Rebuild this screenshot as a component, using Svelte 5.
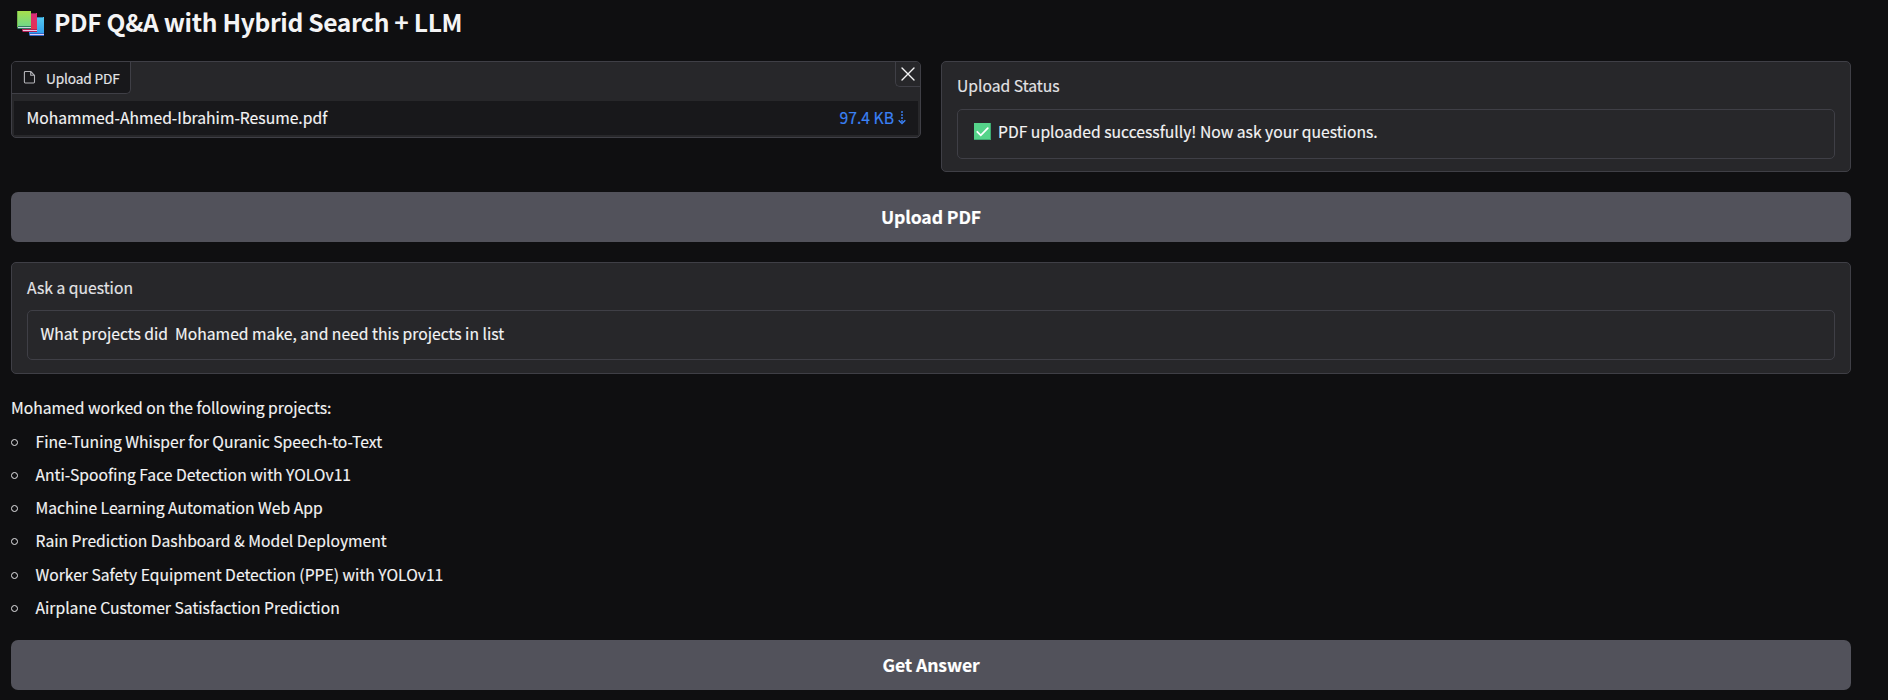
<script>
  const projects = [
    'Fine-Tuning Whisper for Quranic Speech-to-Text',
    'Anti-Spoofing Face Detection with YOLOv11',
    'Machine Learning Automation Web App',
    'Rain Prediction Dashboard & Model Deployment',
    'Worker Safety Equipment Detection (PPE) with YOLOv11',
    'Airplane Customer Satisfaction Prediction'
  ];
  const question = 'What projects did  Mohamed make, and need this projects in list';
</script>

<main>
  <h1>
    <svg class="books" width="28" height="26" viewBox="0 0 28 26">
      <defs>
        <linearGradient id="green" x1="0" y1="0" x2="0" y2="1"><stop offset="0" stop-color="#a7df4c" /><stop offset="1" stop-color="#6fd78b" /></linearGradient>
        <linearGradient id="red" x1="0" y1="0" x2="0" y2="1"><stop offset="0" stop-color="#d92b7c" /><stop offset="1" stop-color="#e5334b" /></linearGradient>
        <linearGradient id="blue" x1="0" y1="0" x2="0" y2="1"><stop offset="0" stop-color="#55c9f0" /><stop offset="1" stop-color="#319fed" /></linearGradient>
      </defs>
      <path d="M14 6h13v17H12V9z" fill="url(#blue)" />
      <path d="M20 6h6v1h-6z" fill="#2b86b8" />
      <path d="M12 22h15v3H13l-1-1z" fill="#2f68c8" /><path d="M13 23h14v1H13z" fill="#e2cdf5" />
      <path d="M7 3l1-1h12v18H5V5z" fill="url(#red)" />
      <path d="M14 2h5v1h-5z" fill="#8f1f55" />
      <path d="M5 18h15v3H6l-1-1z" fill="#b51e55" /><path d="M6 19h14v1H6z" fill="#edc9e7" />
      <path d="M0 0h14v16H0z" fill="url(#green)" />
      <path d="M0 15h14v3H1l-1-1z" fill="#34795f" /><path d="M1 16h13v1H1z" fill="#c9d9dc" />
      <path d="M0 0h1v16H0z" fill="#73b84b" />
    </svg>
    <span>PDF Q&amp;A with Hybrid Search + LLM</span>
  </h1>

  <div class="row">
    <section class="file">
      <div class="bar">
        <div class="tab">
          <svg width="13" height="15" viewBox="0 0 13 15" fill="none" stroke="#b4b4b9" stroke-width="1.1" stroke-linejoin="round"><path d="M7.7 1.5H2.3a.9.9 0 0 0-.9.9v9.7c0 .5.4.9.9.9h8.3c.5 0 .9-.4.9-.9V5.3zM7.7 1.5v3.8h3.8" /></svg>
          <span>Upload PDF</span>
        </div>
        <button class="close" aria-label="Clear">
          <svg width="14" height="14" viewBox="0 0 14 14" stroke="#f4f4f5" stroke-width="1.4" stroke-linecap="round"><path d="M1 1l12 12M13 1L1 13" /></svg>
        </button>
      </div>
      <div class="entry">
        <span class="name">Mohammed-Ahmed-Ibrahim-Resume.pdf</span>
        <span class="size"><span>97.4 KB</span>
          <svg width="8" height="14" viewBox="0 0 8 14" fill="none" stroke="#3b82f6"><path d="M4 0v12" stroke-width="1.4" stroke-dasharray="2 1" /><path d="M.7 9.3L4 12.6l3.3-3.3" stroke-width="1.4" /></svg>
        </span>
      </div>
    </section>

    <section class="card">
      <div class="label">Upload Status</div>
      <div class="field status">
        <svg class="check" width="17" height="17" viewBox="0 0 17 17"><path d="M0 0h17v17H0z" fill="#55d48a" /><path d="M0 16h17v1H0zM16 0h1v17h-1z" fill="#3eaa70" /><path d="M3.3 8.8l3.5 3.5 7-7.2" fill="none" stroke="#fff" stroke-width="1.8" stroke-linecap="round" /></svg>
        <span>PDF uploaded successfully! Now ask your questions.</span>
      </div>
    </section>
  </div>

  <button class="action"><span>Upload PDF</span></button>

  <section class="card ask">
    <div class="label">Ask a question</div>
    <div class="field"><span>{question}</span></div>
  </section>

  <div class="answer">
    <p><span>Mohamed worked on the following projects:</span></p>
    <ul>
      {#each projects as project}
        <li><i></i><span>{project}</span></li>
      {/each}
    </ul>
  </div>

  <button class="action"><span>Get Answer</span></button>
</main>

<style>
  :global(body) { background: #0f0f11; }
  main {
    box-sizing: border-box;
    width: 1888px;
    height: 700px;
    padding: 0 37px 0 11px;
    overflow: hidden;
    background: #0f0f11;
    color: #f4f4f5;
    font: 400 15.68px/26px "Noto Sans CJK SC", "Noto Sans", sans-serif;
    -webkit-text-stroke: 0.15px currentColor;
  }
  span { white-space: pre; }
  h1 {
    display: flex;
    align-items: center;
    gap: 9px;
    height: 46px;
    margin: 0 0 15px;
    padding-left: 6px;
    font-size: 24.6px;
    font-weight: 600;
    letter-spacing: -0.34px;
    -webkit-text-stroke: 0;
  }
  h1 span { padding-bottom: 5px; }
  .books { flex: none; margin-top: 2px; }
  .row { display: grid; grid-template-columns: 1fr 1fr; gap: 20px; height: 111px; margin-bottom: 20px; align-items: start; }
  section { box-sizing: border-box; border: 1px solid #3f3f46; border-radius: 5px; background: #27272a; }
  .file { height: 77px; padding: 0 2px; overflow: hidden; }
  .bar { display: flex; justify-content: space-between; align-items: flex-start; height: 39px; margin: 0 -2px; }
  .tab {
    box-sizing: border-box;
    display: flex;
    align-items: center;
    gap: 10px;
    width: 119px;
    height: 32px;
    padding: 0 0 1px 11px;
    border: solid #3f3f46;
    border-width: 0 1px 1px 0;
    border-radius: 0 0 5px 0;
    background: #18181b;
    color: #e4e4e7;
    font-size: 13.7px;
    letter-spacing: -0.15px;
  }
  .tab span { padding-top: 1px; }
  .close {
    box-sizing: border-box;
    display: grid;
    place-items: center;
    width: 25px;
    height: 25px;
    padding: 0 1px 0 0;
    border: solid #3f3f46;
    border-width: 0 0 1px 1px;
    border-radius: 0 0 0 5px;
    background: #27272a;
  }
  .entry { display: flex; justify-content: space-between; align-items: center; height: 34px; padding: 0 12px 0 12.5px; background: #18181b; }
  .size { display: flex; align-items: center; gap: 4px; color: #3b82f6; }
  .card { height: 111px; padding: 11px 15px 0; }
  .label { height: 26px; margin-bottom: 10px; color: #e4e4e7; }
  .field { box-sizing: border-box; display: flex; align-items: center; height: 50px; padding: 0 12.5px 3px; border: 1px solid #3f3f46; border-radius: 5px; }
  .status { padding: 0 12px 5px; }
  .check { flex: none; margin: 0 7px 0 4px; }
  .action {
    display: flex;
    align-items: center;
    justify-content: center;
    width: 100%;
    height: 50px;
    padding: 0 0 1px;
    border: 0;
    border-radius: 7px;
    background: #52525b;
    color: #fff;
    font: 600 17.6px/26px "Noto Sans CJK SC", "Noto Sans", sans-serif;
    letter-spacing: -0.1px;
  }
  .ask { height: 112px; margin: 20px 0; padding-top: 12px; }
  .ask .label { margin-bottom: 9px; }
  .answer { height: 246px; padding-top: 1px; box-sizing: border-box; }
  p { margin: 0; height: 30.3px; }
  ul { margin: 0; padding: 0; list-style: none; }
  li { display: flex; align-items: center; height: 33.2px; }
  li i { box-sizing: border-box; flex: none; width: 7px; height: 7px; margin: 1px 17.5px 0 0; border: 1px solid #e4e4e7; border-radius: 50%; }
</style>
